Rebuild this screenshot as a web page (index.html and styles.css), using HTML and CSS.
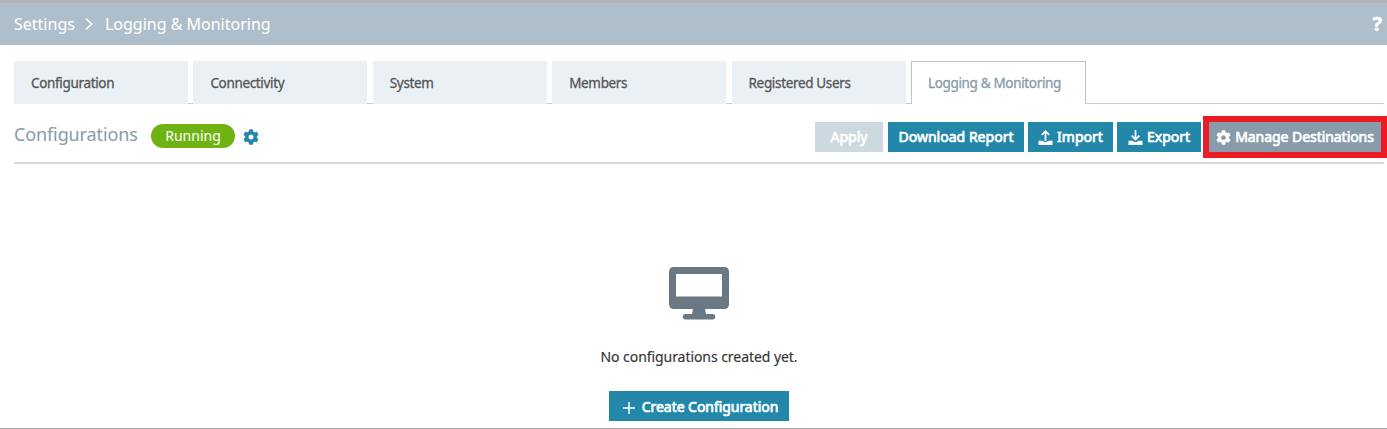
FILE: index.html
```html
<!DOCTYPE html>
<html lang="en">
<head>
<meta charset="utf-8">
<title>Logging &amp; Monitoring</title>
<link rel="stylesheet" href="styles.css">
</head>
<body>
<svg class="sprite" width="0" height="0">
  <symbol id="gear" viewBox="0 0 512 512"><path fill="currentColor" d="M487.4 315.7l-42.6-24.6c4.3-23.2 4.3-47 0-70.2l42.6-24.6c4.9-2.8 7.1-8.6 5.5-14-11.1-35.6-30-67.8-54.7-94.6-3.800-4.100-10-5.100-14.800-2.300L380.800 110c-17.900-15.400-38.500-27.300-60.800-35.100V25.800c0-5.600-3.900-10.500-9.400-11.700-36.700-8.200-74.300-7.800-109.200 0-5.500 1.200-9.400 6.100-9.400 11.700V75c-22.200 7.900-42.800 19.800-60.800 35.100L88.700 85.500c-4.900-2.800-11-1.900-14.800 2.300-24.700 26.700-43.600 58.900-54.700 94.600-1.700 5.400.6 11.200 5.500 14L67.300 221c-4.300 23.200-4.300 47 0 70.200l-42.600 24.600c-4.900 2.800-7.100 8.600-5.500 14 11.100 35.600 30 67.800 54.700 94.600 3.800 4.100 10 5.100 14.800 2.300l42.600-24.600c17.900 15.400 38.500 27.300 60.800 35.100v49.200c0 5.600 3.900 10.500 9.400 11.700 36.700 8.200 74.300 7.800 109.200 0 5.500-1.200 9.400-6.100 9.400-11.700v-49.200c22.200-7.900 42.800-19.800 60.800-35.100l42.600 24.600c4.900 2.800 11 1.900 14.800-2.300 24.700-26.700 43.600-58.900 54.700-94.600 1.500-5.500-.7-11.300-5.600-14.100zM256 336c-44.100 0-80-35.900-80-80s35.900-80 80-80 80 35.900 80 80-35.900 80-80 80z"/></symbol>
</svg>
<header class="topbar">
  <nav class="crumbs">
    <span class="crumb crumb-root">Settings</span>
    <svg class="chevron" viewBox="0 0 8 12"><path d="M1 .8 6.800 6 1 11.200" fill="none" stroke="currentColor" stroke-width="1.600"/></svg>
    <span class="crumb">Logging &amp; Monitoring</span>
  </nav>
  <span class="help">?</span>
</header>
<main class="page">
  <nav class="tabs">
    <a class="tab">Configuration</a>
    <a class="tab">Connectivity</a>
    <a class="tab">System</a>
    <a class="tab">Members</a>
    <a class="tab">Registered Users</a>
    <a class="tab active">Logging &amp; Monitoring</a>
  </nav>
  <section class="toolbar">
    <h1 class="title">Configurations</h1>
    <span class="status">Running</span>
    <svg class="status-gear"><use href="#gear"/></svg>
    <div class="actions">
      <button class="btn apply">Apply</button>
      <button class="btn report">Download Report</button>
      <button class="btn import"><svg class="icon" viewBox="0 0 15 15"><path d="M7.500 11V1.200M3.700 5l3.800-3.800L11.300 5" fill="none" stroke="currentColor" stroke-width="1.700"/><path d="M.5 10.800h4.200q.8 1.300 2.800 1.300t2.800-1.300h4.200V15H.5z" fill="currentColor"/></svg>Import</button>
      <button class="btn export"><svg class="icon" viewBox="0 0 15 15"><path d="M7.500 0V9.500M3.700 5.700l3.800 3.800 3.800-3.800" fill="none" stroke="currentColor" stroke-width="1.700"/><path d="M.5 10.800h4.200q.8 1.300 2.800 1.300t2.800-1.300h4.200V15H.5z" fill="currentColor"/></svg>Export</button>
      <div class="highlight"><button class="btn manage"><svg class="icon"><use href="#gear"/></svg>Manage Destinations</button></div>
    </div>
  </section>
  <section class="empty">
    <svg class="monitor" viewBox="0 0 60 53"><path fill="currentColor" fill-rule="evenodd" d="M5 0h50q5 0 5 5v32q0 5-5 5H36l1 5h6.500a2.750 2.750 0 0 1 0 5.500h-27a2.750 2.750 0 0 1 0-5.500H23l1-5H5q-5 0-5-5V5q0-5 5-5zm2 7v22.500h46V7z"/></svg>
    <p class="message">No configurations created yet.</p>
    <button class="btn create"><svg class="plus" viewBox="0 0 12 12"><path d="M6 0v12M0 6h12" stroke="currentColor" stroke-width="1.500"/></svg>Create Configuration</button>
  </section>
</main>
</body>
</html>
```
FILE: styles.css
```css
* { box-sizing: border-box; }
body { margin: 0; height: 429px; display: flex; flex-direction: column; overflow: hidden; background: #fff; border-bottom: 1px solid #aaa; font-family: "Noto Sans", sans-serif; color: #333; }
.sprite { position: absolute; }
.topbar { height: 45px; flex: none; display: flex; align-items: center; justify-content: space-between; padding: 0 5px 0 14px; background: #aebfcb; border-top: 3px solid #b2b4b4; color: #fff; }
.crumbs { display: flex; align-items: center; font-size: 16px; line-height: 22px; }
.crumb { white-space: nowrap; }
.chevron { width: 8px; height: 12px; margin: 0 12px 0 10px; }
.help { font-size: 20px; font-weight: 700; line-height: 24px; -webkit-text-stroke: .5px currentColor; }
.page { padding: 16px 3px 0 14px; display: flex; flex-direction: column; }
.tabs { height: 43px; display: flex; gap: 5.400px; border-bottom: 1px solid #c3d0da; }
.tab { width: 174px; height: 43px; flex: none; padding-left: 17px; background: #ebf0f5; color: #555; font-size: 13.500px; letter-spacing: -.34px; line-height: 45px; white-space: nowrap; -webkit-text-stroke: .3px currentColor; }
.tab.active { width: 175px; padding-left: 16px; line-height: 43px; background: #fff; border: 1px solid #b9c6ce; border-bottom: 0; color: #879baa; }
.toolbar { height: 60px; display: flex; align-items: center; border-bottom: 2px solid #d3dbe1; }
.title { margin: 0; font-size: 18px; letter-spacing: -.12px; font-weight: 400; color: #879baa; line-height: 24px; width: 137px; white-space: nowrap; padding-top: 1px; }
.status { width: 84px; height: 24px; border-radius: 12px; background: #6fb312; color: #fff; font-size: 14px; line-height: 24px; text-align: center; margin-top: 5px; }
.status-gear { width: 16px; height: 16px; margin: 8px 0 0 8px; color: #2387aa; }
.actions { margin: 7px -3px 0 auto; height: 42px; display: flex; align-items: center; }
.btn { height: 30px; border: 0; padding: 1px 0 0; display: flex; align-items: center; justify-content: center; background: #2387aa; color: #fff; font: 400 14px/30px "Noto Sans", sans-serif; -webkit-text-stroke: .7px currentColor; white-space: nowrap; }
.btn svg { flex: none; -webkit-text-stroke: 0; }
.apply { width: 68px; background: #cdd9e1; margin-right: 5px; }
.report { width: 136px; margin-right: 4px; letter-spacing: .02px; }
.import { width: 85px; margin-right: 4px; }
.export { width: 84px; margin-right: 2px; }
.manage { width: 172px; background: #879baa; letter-spacing: -.05px; }
.highlight { border: 6px solid #ed1c24; }
.icon { width: 15px; height: 15px; margin: 1px 4px 0 0; }
.empty { display: flex; flex-direction: column; align-items: center; width: 1370px; padding-top: 103px; }
.monitor { width: 60px; height: 53px; color: #697882; }
.message { margin: 26px 0 0; font-size: 14px; letter-spacing: -.06px; line-height: 22px; -webkit-text-stroke: .15px currentColor; }
.create { width: 180px; margin-top: 23px; padding-left: 3px; letter-spacing: -.05px; }
.plus { width: 12px; height: 12px; margin: 2px 7px 0 0; }
```
